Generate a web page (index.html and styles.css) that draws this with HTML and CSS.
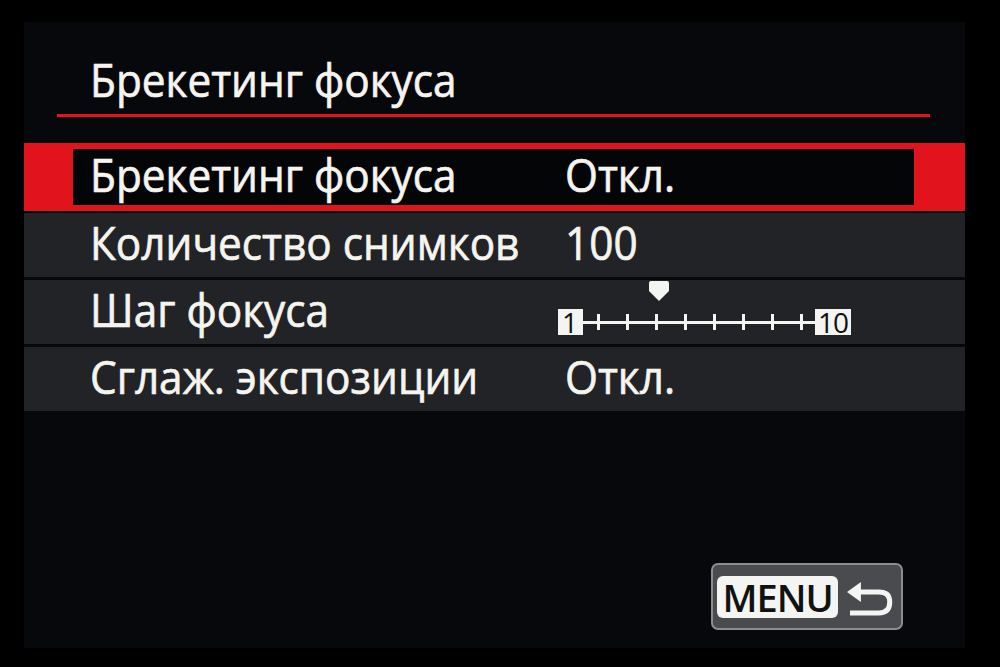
FILE: index.html
```html
<!DOCTYPE html>
<html lang="ru">
<head>
    <meta charset="UTF-8">
    <meta name="viewport" content="width=device-width, initial-scale=1.0">
    <title>Брекетинг фокуса</title>
    <link rel="stylesheet" href="styles.css">
</head>
<body>
    <div class="screen">
        <div class="header">
            <span class="txt">Брекетинг фокуса</span>
        </div>
        <ul class="menu">
            <li class="row active">
                <div class="sel">
                    <span class="label"><span class="txt">Брекетинг фокуса</span></span>
                    <span class="value"><span class="txt">Откл.</span></span>
                </div>
            </li>
            <li class="row">
                <span class="label"><span class="txt">Количество снимков</span></span>
                <span class="value"><span class="txt">100</span></span>
            </li>
            <li class="row">
                <span class="label"><span class="txt">Шаг фокуса</span></span>
                <div class="slider">
                    <span class="box">1</span>
                    <div class="track">
                        <i></i><i></i><i></i><i></i><i></i><i></i><i></i><i></i>
                        <svg class="marker" width="22" height="20" viewBox="0 0 22 20">
                            <path d="M1 2 Q1 0 3 0 H19 Q21 0 21 2 V10 L11 20 L1 10 Z" fill="#f4f4f2"/>
                        </svg>
                    </div>
                    <span class="box">10</span>
                </div>
            </li>
            <li class="row">
                <span class="label"><span class="txt">Сглаж. экспозиции</span></span>
                <span class="value"><span class="txt">Откл.</span></span>
            </li>
        </ul>
        <div class="menu-btn">
            <span class="menu-key">MENU</span>
            <svg class="back" width="46" height="34" viewBox="0 0 46 34">
                <path d="M0 10 L14 0 V20 Z" fill="#f4f4f2"/>
                <path d="M12 10 H32 Q43 10 43 20 Q43 31 32 31 H3" fill="none" stroke="#f4f4f2" stroke-width="5"/>
            </svg>
        </div>
    </div>
</body>
</html>
```

FILE: styles.css
```css
body { margin: 0; background: #000; font-family: "Open Sans", "Noto Sans", sans-serif; color: #f5f4ef; }
.screen { margin: 22px 0 0 24px; width: 941px; height: 626px; background: #06080b; display: flex; flex-direction: column; }
.txt { display: inline-block; transform: scaleX(0.92); transform-origin: left center; white-space: nowrap; -webkit-text-stroke: 0.7px currentColor; }

.header { margin: 0 35px 0 33px; padding: 31px 0 0 33px; height: 61px; font-size: 46px; line-height: 53px; border-bottom: 3px solid #e3141d; }

.menu { list-style: none; margin: 26px 0 0; padding: 0; display: flex; flex-direction: column; gap: 3px; }
.row { height: 64px; display: flex; align-items: center; padding-left: 66px; font-size: 46px; background: #222326; }
.row .label, .row .value { margin-top: -6px; }
.row.active { height: 68px; padding: 6px 51px 6px 49px; box-sizing: border-box; background: #e1131c; margin-bottom: -1px; }
.sel { flex: 1; height: 100%; background: #040507; display: flex; align-items: center; padding-left: 17px; }
.label { width: 475px; flex: none; }

.slider { display: flex; align-items: center; margin-top: 20px; margin-left: -7px; }
.box { background: #f4f4f2; color: #111; font-size: 28px; line-height: 26px; height: 26px; padding: 0 3px; letter-spacing: -1px; }
.slider .box:first-child { width: 19px; padding: 0 2px 0 4px; }
.track { position: relative; width: 232px; height: 16px; display: flex; justify-content: space-between; align-items: center; padding: 0 12px 0 14px; box-sizing: border-box; }
.track::before { content: ""; position: absolute; left: 0; right: 0; top: 7px; height: 3px; background: #f4f4f2; }
.track i { width: 3px; height: 16px; background: #f4f4f2; }
.marker { position: absolute; left: 65px; top: -33px; }

.menu-btn { margin: auto 62px 18px auto; width: 192px; height: 67px; box-sizing: border-box; border: 2px solid #8b8d8f; border-radius: 7px; background: #4a4b4e; display: flex; align-items: center; padding: 0 8px 0 4px; gap: 9px; }
.menu-key { background: #f4f4f2; color: #111; border-radius: 6px; width: 122px; height: 42px; font-size: 38px; font-weight: 600; line-height: 42px; text-align: center; letter-spacing: -1px; }
.back { margin-top: 4px; }
```
